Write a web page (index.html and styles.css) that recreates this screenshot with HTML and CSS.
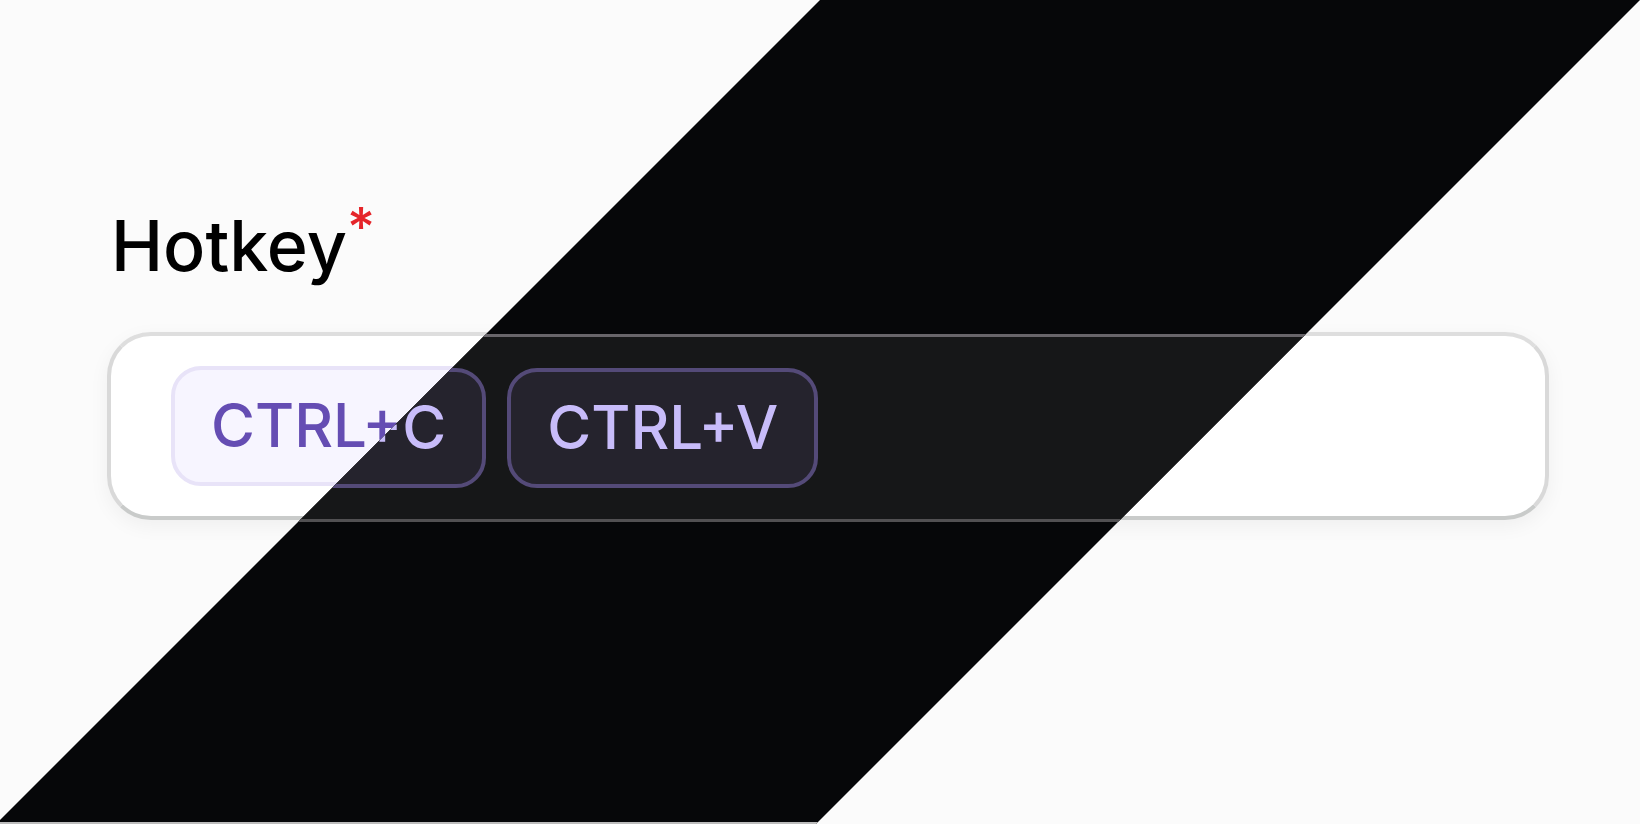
FILE: index.html
```html
<!DOCTYPE html>
<html lang="en">
<head>
<meta charset="utf-8">
<title>Hotkey</title>
<link rel="stylesheet" href="styles.css">
</head>
<body>
<main class="preview">
  <section class="panel panel-light">
    <label class="label" for="hotkey">Hotkey<span class="required">*</span></label>
    <div class="field">
      <span class="chip">CTRL+C</span>
      <input class="entry" id="hotkey" type="text" required>
    </div>
  </section>
  <section class="panel panel-dark">
    <div class="field">
      <span class="chip">CTRL+C</span>
      <span class="chip">CTRL+V</span>
      <input class="entry" type="text" aria-label="Hotkey, dark theme">
    </div>
  </section>
</main>
</body>
</html>
```

FILE: styles.css
```css
* {
  box-sizing: border-box;
}

body {
  margin: 0;
  background: #fbfbfb;
  font-family: Inter, "Liberation Sans", sans-serif;
  font-weight: 500;
}

.preview {
  display: grid;
  grid-template-columns: minmax(0, 1fr);
  min-height: 100vh;
}

.panel {
  grid-area: 1 / 1;
  display: flex;
  flex-direction: column;
  padding: 204px 91px 0 107px;
}

.panel-light {
  background: #fbfbfb;
  color: #000;
}

.panel-dark {
  padding-top: 334px;
  background: #060709;
  border-bottom: 2px solid #bcbcbc;
  clip-path: polygon(50% 0, 100% 0, calc(50% - 4px) 100%, -4px 100%);
}

.label {
  display: flex;
  align-items: flex-start;
  height: 128px;
  padding-left: 4px;
  font-size: 70px;
  line-height: 84px;
}

.required {
  color: #e5252a;
  font-size: 54px;
  line-height: 46px;
}

.field {
  display: flex;
  align-items: center;
  gap: 21px;
  padding: 30px 60px;
  border: 4px solid #d9d9d9;
  border-top-color: #dedede;
  border-bottom-color: #c9cbca;
  border-radius: 44px;
  background: #fff;
  box-shadow: 0 6px 20px rgba(0, 0, 0, 0.05);
}

.panel-dark .field {
  border: 3px solid #515052;
  border-top-color: #68656a;
  padding: 31px 61px;
  background: #161718;
  box-shadow: none;
}

.chip {
  padding: 19px 36px 21px;
  border: 4px solid #e8e3f8;
  border-radius: 30px;
  background: #f7f5ff;
  color: #654db3;
  font-size: 60px;
  line-height: 72px;
  white-space: nowrap;
}

.panel-dark .chip {
  border-color: #544a78;
  background: #25232d;
  color: #c8bcfa;
}

.entry {
  flex: 1;
  min-width: 0;
  border: 0;
  padding: 0;
  outline: 0;
  background: transparent;
  color: inherit;
  font: inherit;
  font-size: 60px;
}
```
